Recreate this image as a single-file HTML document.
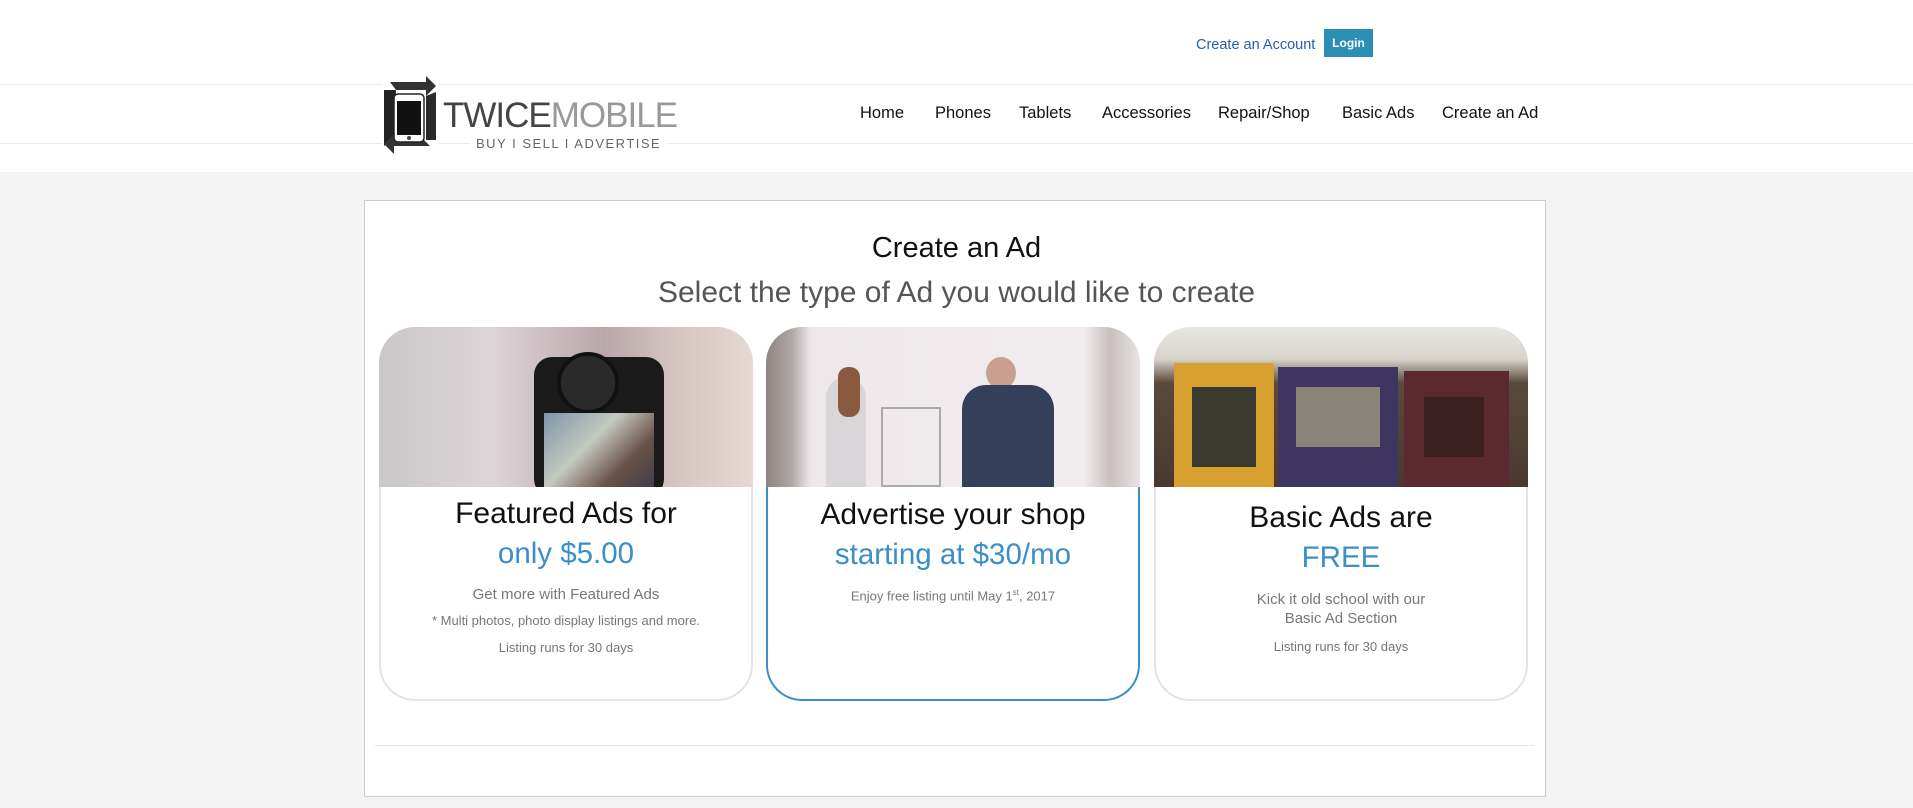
<!DOCTYPE html>
<html><head><meta charset="utf-8">
<style>
*{margin:0;padding:0;box-sizing:border-box}
body{width:1913px;height:808px;background:#f4f4f4;font-family:"Liberation Sans",sans-serif;position:relative;overflow:hidden}
.top{position:absolute;left:0;top:0;width:1913px;height:172px;background:#fff}
.l1{position:absolute;left:0;top:84px;width:1913px;height:1px;background:#ececec}
.l2{position:absolute;left:0;top:143px;width:1913px;height:1px;background:#ececec}
.acct{position:absolute;left:1196px;top:37px;font-size:14.5px;color:#2a5db0}
.login{position:absolute;left:1324px;top:29px;width:49px;height:28px;background:#2b8eb5;color:#fff;font-size:12px;font-weight:bold;text-align:center;line-height:28px}
.nav{position:absolute;top:104px;font-size:16.5px;color:#111}
.logo{position:absolute;left:382px;top:76px;width:300px;height:78px}
.tw{position:absolute;font-size:35px;letter-spacing:-1px;color:#444;line-height:1;background:#fff}
.tw span{color:#999}
.tag{position:absolute;font-size:13px;color:#666;letter-spacing:1.5px;background:#fff;padding:0 6px}
.box{position:absolute;left:364px;top:200px;width:1182px;height:597px;background:#fff;border:1px solid #ccc}
.h1{position:absolute;left:0;width:1913px;text-align:center;top:232px;font-size:29px;color:#111}
.h2{position:absolute;left:0;width:1913px;text-align:center;top:276px;font-size:30px;color:#555}
.card{position:absolute;top:327px;width:374px;height:374px;text-align:center}
.img{height:160px;width:100%;position:relative;overflow:hidden;border-radius:36px 36px 0 0}
.body{height:214px;border:2px solid #e4e4e4;border-top:none;border-radius:0 0 36px 36px;background:#fff}
.sel .body{border-color:#3a8fc8}
.t{font-size:30px;color:#111;line-height:1}
.b{font-size:29.5px;color:#3a8fc8;line-height:1}
.s{font-size:15px;color:#777}
.x{font-size:13px;color:#777}
.hr{position:absolute;left:375px;top:745px;width:1159px;height:1px;background:#e8e8e8}
</style></head><body>
<div class="top"></div>
<div class="l1"></div><div class="l2"></div>
<div class="acct">Create an Account</div>
<div class="login">Login</div>
<div class="nav" style="left:860px">Home</div>
<div class="nav" style="left:935px">Phones</div>
<div class="nav" style="left:1019px">Tablets</div>
<div class="nav" style="left:1102px">Accessories</div>
<div class="nav" style="left:1218px">Repair/Shop</div>
<div class="nav" style="left:1342px">Basic Ads</div>
<div class="nav" style="left:1442px">Create an Ad</div>
<div class="logo">
<svg width="56" height="78" viewBox="0 0 56 78" style="position:absolute;left:0;top:0;background:#fff">
<polygon points="8,6 44,6 44,0 54,10 44,20 44,14 14,14" fill="#333"/>
<polygon points="2,14 14,14 12,62 2,70" fill="#222"/>
<polygon points="48,70 12,70 12,78 2,68 12,58 12,64 42,64" fill="#333"/>
<polygon points="44,20 54,16 54,64 44,64" fill="#2a2a2a"/>
<rect x="12" y="18" width="30" height="48" rx="4" fill="#fff" stroke="#222" stroke-width="1.5"/>
<rect x="15" y="25" width="24" height="34" fill="#111"/>
<circle cx="27" cy="62" r="2" fill="#444"/>
</svg>
<div class="tw" style="left:61px;top:22px">TWICE<span>MOBILE</span></div>
<div class="tag" style="left:88px;top:60px">BUY I SELL I ADVERTISE</div>
</div>
<div class="box"></div>
<div class="h1">Create an Ad</div>
<div class="h2">Select the type of Ad you would like to create</div>

<div class="card" style="left:379px">
<div class="img" style="background:linear-gradient(90deg,#c9c7c9,#ddd5d8 30%,#b9a7aa 60%,#d6c6c2 80%,#e6d8d4)">
<div style="position:absolute;left:155px;top:30px;width:130px;height:140px;background:#1a1a1a;border-radius:18px"></div>
<div style="position:absolute;left:178px;top:25px;width:62px;height:62px;background:#2a2a2a;border-radius:50%;border:4px solid #111"></div>
<div style="position:absolute;left:165px;top:86px;width:110px;height:80px;background:linear-gradient(135deg,#7c96a8,#c4c8c0 40%,#6a5248 70%,#3a3a4a)"></div>
</div>
<div class="body">
<div class="t" style="padding-top:12px">Featured Ads for</div>
<div class="b" style="margin-top:10px">only $5.00</div>
<div class="s" style="margin-top:17px">Get more with Featured Ads</div>
<div class="x" style="margin-top:10px">* Multi photos, photo display listings and more.</div>
<div class="x" style="margin-top:12px">Listing runs for 30 days</div>
</div></div>

<div class="card sel" style="left:766px">
<div class="img" style="background:linear-gradient(90deg,#8e8482 0,#b0a8a6 7%,#eee8ea 12%,#f1ecee 85%,#c9bfbe 92%,#e9e3e3)">
<div style="position:absolute;left:60px;top:50px;width:40px;height:110px;background:#d8d6d8;border-radius:20px 20px 0 0"></div>
<div style="position:absolute;left:72px;top:40px;width:22px;height:50px;background:#8a5a40;border-radius:10px"></div>
<div style="position:absolute;left:220px;top:30px;width:30px;height:32px;background:#c9a090;border-radius:50%"></div>
<div style="position:absolute;left:196px;top:58px;width:92px;height:110px;background:#34405a;border-radius:24px 24px 0 0"></div>
<div style="position:absolute;left:115px;top:80px;width:60px;height:80px;border:2px solid #aaa"></div>
</div>
<div class="body">
<div class="t" style="padding-top:13px">Advertise your shop</div>
<div class="b" style="margin-top:10px">starting at $30/mo</div>
<div class="x" style="margin-top:18px">Enjoy free listing until May 1<sup style="font-size:8px">st</sup>, 2017</div>
</div></div>

<div class="card" style="left:1154px">
<div class="img" style="background:linear-gradient(180deg,#e8e6e2 0,#d8d4cc 20%,#5a4a3a 35%,#4a3830)">
<div style="position:absolute;left:20px;top:36px;width:100px;height:124px;background:#d8a030"></div>
<div style="position:absolute;left:38px;top:60px;width:64px;height:80px;background:#3a3a30"></div>
<div style="position:absolute;left:124px;top:40px;width:120px;height:120px;background:#3e3660"></div>
<div style="position:absolute;left:142px;top:60px;width:84px;height:60px;background:#8a8478"></div>
<div style="position:absolute;left:250px;top:44px;width:105px;height:116px;background:#5a2a30"></div>
<div style="position:absolute;left:270px;top:70px;width:60px;height:60px;background:#3a2020"></div>
</div>
<div class="body">
<div class="t" style="padding-top:16px">Basic Ads are</div>
<div class="b" style="margin-top:10px">FREE</div>
<div class="s" style="margin-top:18px">Kick it old school with our</div>
<div class="s" style="margin-top:2px">Basic Ad Section</div>
<div class="x" style="margin-top:12px">Listing runs for 30 days</div>
</div></div>
<div class="hr"></div>
</body></html>
